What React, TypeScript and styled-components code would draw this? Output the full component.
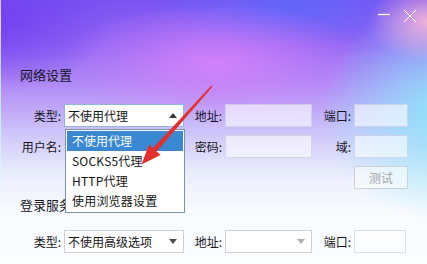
import React from "react";
import styled, { createGlobalStyle } from "styled-components";

const Global = createGlobalStyle`
  html, body { margin: 0; padding: 0; }
  body { width: 427px; height: 264px; overflow: hidden; font-family: "Noto Sans CJK SC", "Noto Sans", sans-serif; }
`;

const Window = styled.div`
  position: relative;
  width: 427px;
  height: 264px;
  overflow: hidden;
  display: flex;
  flex-direction: column;
  font-family: "Noto Sans CJK SC", "Noto Sans", sans-serif;
  color: #1e1e24;
  background:
    radial-gradient(ellipse 60px 40px at 427px 22px, rgba(245, 180, 215, 0.95), rgba(245, 180, 215, 0) 100%),
    radial-gradient(ellipse 120px 110px at 440px 110px, rgba(140, 232, 250, 0.95), rgba(140, 232, 250, 0) 100%),
    radial-gradient(ellipse 150px 60px at 215px 62px, rgba(214, 130, 250, 0.9), rgba(214, 130, 250, 0) 100%),
    radial-gradient(ellipse 140px 40px at 290px 8px, rgba(96, 104, 250, 0.9), rgba(96, 104, 250, 0) 100%),
    radial-gradient(ellipse 110px 70px at 0px 20px, rgba(110, 60, 240, 0.8), rgba(110, 60, 240, 0) 100%),
    linear-gradient(180deg, #7a52f2 0%, #9468f4 18%, #b08af6 32%, #cec4fa 50%, #eaeefc 66%, #f8fbff 80%, #fbfdff 100%);
  border-left: 1px solid rgba(255, 255, 255, 0.45);
  box-sizing: border-box;
`;

const TitleBar = styled.div`
  height: 28px;
  display: flex;
  justify-content: flex-end;
  align-items: flex-start;
  padding-top: 9px;
  padding-right: 10px;
  gap: 12px;
  box-sizing: border-box;
`;

const Ctrl = styled.svg`
  display: block;
  width: 14px;
  height: 14px;
`;

const Heading = styled.div<{ $mt: number }>`
  margin-top: ${(p) => p.$mt}px;
  padding-left: 19px;
  font-size: 13px;
  line-height: 20px;
  height: 20px;
  color: #16161e;
`;

const FormGrid = styled.div<{ $mt: number }>`
  margin-top: ${(p) => p.$mt}px;
  display: grid;
  grid-template-columns: 63px 120px 41px 87px 42px 54px;
  grid-auto-rows: 23px;
  row-gap: 8px;
  font-size: 12px;
`;

const Label = styled.div`
  display: flex;
  align-items: center;
  justify-content: flex-end;
  padding-right: 3px;
  line-height: 16px;
  white-space: nowrap;
  color: #16161c;
`;

const Input = styled.div<{ $w?: number }>`
  box-sizing: border-box;
  width: ${(p) => (p.$w ? `${p.$w}px` : "100%")};
  height: 23px;
  background: rgba(255, 255, 255, 0.6);
  border: 1px solid rgba(190, 190, 215, 0.55);
`;

const Button = styled.div`
  box-sizing: border-box;
  height: 23px;
  display: flex;
  align-items: center;
  justify-content: center;
  background: rgba(255, 255, 255, 0.55);
  border: 1px solid rgba(200, 200, 210, 0.8);
  color: #a4a4a8;
  font-size: 12px;
`;

const Select = styled.div<{ $open?: boolean }>`
  position: relative;
  box-sizing: border-box;
  height: 23px;
  display: flex;
  align-items: center;
  justify-content: space-between;
  padding: 0 6px 0 3px;
  background: #fff;
  border: 1px solid ${(p) => (p.$open ? "#8fb6dc" : "#cfd0d6")};
  font-size: 12px;
  color: #141414;
  white-space: nowrap;
`;

const Caret = styled.span<{ $up?: boolean; $light?: boolean }>`
  width: 0;
  height: 0;
  border-left: 4px solid transparent;
  border-right: 4px solid transparent;
  ${(p) =>
    p.$up
      ? `border-bottom: 5px solid #3a3a3a;`
      : `border-top: 5px solid ${p.$light ? "#b0b0b4" : "#505054"};`}
`;

const DropList = styled.div`
  position: absolute;
  z-index: 5;
  left: 0;
  top: 24px;
  width: 120px;
  box-sizing: border-box;
  padding: 1px;
  background: #fff;
  border: 1px solid #7893ad;
`;

const Item = styled.div<{ $active?: boolean }>`
  height: 20px;
  line-height: 20px;
  padding-left: 5px;
  font-size: 12px;
  letter-spacing: ${(p) => (p.$active ? "0" : "0.2px")};
  color: ${(p) => (p.$active ? "#fff" : "#141414")};
  background: ${(p) => (p.$active ? "#3a88d2" : "transparent")};
`;

const Overlay = styled.svg`
  position: absolute;
  left: 0;
  top: 0;
  width: 427px;
  height: 264px;
  pointer-events: none;
  z-index: 10;
`;

const options = ["不使用代理", "SOCKS5代理", "HTTP代理", "使用浏览器设置"];

export default function App() {
  return (
    <>
      <Global />
      <Window>
        <TitleBar>
          <Ctrl viewBox="0 0 14 14">
            <line x1="1" y1="5.5" x2="13" y2="5.5" stroke="#fff" strokeWidth="1.3" />
          </Ctrl>
          <Ctrl viewBox="0 0 14 14">
            <path d="M1 1 L13 13 M13 1 L1 13" stroke="#fff" strokeWidth="1" fill="none" />
          </Ctrl>
        </TitleBar>

        <Heading $mt={37}>网络设置</Heading>

        <FormGrid $mt={19}>
          <Label>类型:</Label>
          <Select $open>
            <span>不使用代理</span>
            <Caret $up />
            <DropList>
              {options.map((o, i) => (
                <Item key={o} $active={i === 0}>
                  {o}
                </Item>
              ))}
            </DropList>
          </Select>
          <Label>地址:</Label>
          <Input />
          <Label>端口:</Label>
          <Input />

          <Label>用户名:</Label>
          <div />
          <Label>密码:</Label>
          <Input />
          <Label>域:</Label>
          <Input />

          <div />
          <div />
          <div />
          <div />
          <div />
          <Button>测试</Button>
        </FormGrid>

        <Heading $mt={6}>登录服务器</Heading>

        <FormGrid $mt={15}>
          <Label>类型:</Label>
          <Select>
            <span>不使用高级选项</span>
            <Caret />
          </Select>
          <Label>地址:</Label>
          <Select>
            <span />
            <Caret $light />
          </Select>
          <Label>端口:</Label>
          <Input $w={52} />
        </FormGrid>

        <Overlay viewBox="0 0 427 264">
          <polygon points="211.6,86.4 210.4,85.6 151.8,148.2 155.6,151.6" fill="#e3302c" />
          <polygon points="140.5,164.5 148,144.6 159.6,155" fill="#e3302c" />
        </Overlay>
      </Window>
    </>
  );
}
